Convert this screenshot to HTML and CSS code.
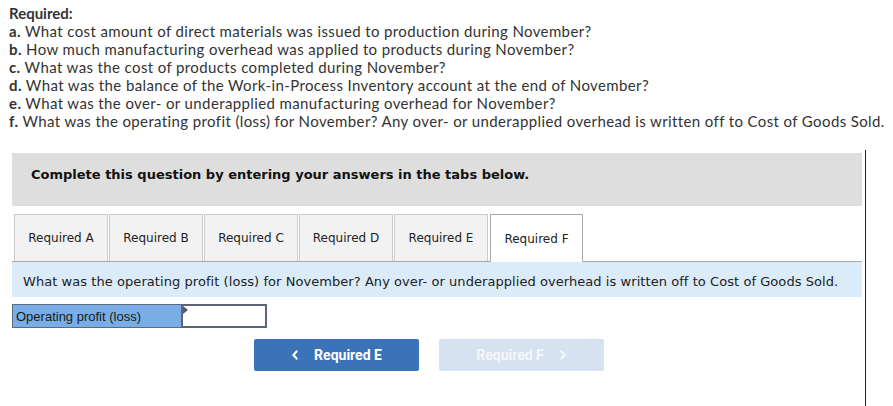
FILE: index.html
```html
<!doctype html>
<html>
  <head>
    <meta charset="utf-8" />
    <link rel="stylesheet" href="styles.css">
  </head>
  <body>
    <div class="required">
      <div class="required-title">Required:</div>
      <div class="q"><b>a.</b> What cost amount of direct materials was issued to production during November?</div>
      <div class="q"><b>b.</b> How much manufacturing overhead was applied to products during November?</div>
      <div class="q"><b>c.</b> What was the cost of products completed during November?</div>
      <div class="q"><b>d.</b> What was the balance of the Work-in-Process Inventory account at the end of November?</div>
      <div class="q"><b>e.</b> What was the over- or underapplied manufacturing overhead for November?</div>
      <div class="q"><b>f.</b> What was the operating profit (loss) for November? Any over- or underapplied overhead is written off to Cost of Goods Sold.</div>
    </div>

    <div class="panel">
      <div class="instructions">Complete this question by entering your answers in the tabs below.</div>

      <div class="tabs">
        <div class="tab">Required A</div>
        <div class="tab">Required B</div>
        <div class="tab">Required C</div>
        <div class="tab">Required D</div>
        <div class="tab">Required E</div>
        <div class="tab active">Required F</div>
      </div>

      <div class="prompt">What was the operating profit (loss) for November? Any over- or underapplied overhead is written off to Cost of Goods Sold.</div>

      <div class="answer-row">
        <div class="answer-label">Operating profit (loss)</div>
        <div class="answer-input"><span class="marker"></span></div>
      </div>

      <div class="nav">
        <button class="nav-btn prev">
          <svg viewBox="0 0 10 14" class="chev"><path d="M7 2 L2.5 7 L7 12" fill="none" stroke="currentColor" stroke-width="2.4" /></svg>
          Required E
        </button>
        <button class="nav-btn next" disabled>
          Required F
          <svg viewBox="0 0 10 14" class="chev"><path d="M3 2 L7.5 7 L3 12" fill="none" stroke="currentColor" stroke-width="2.4" /></svg>
        </button>
      </div>
    </div>
  </body>
</html>
```

FILE: styles.css
```css
* {
  box-sizing: border-box;
}

body {
  margin: 0;
  background: #fff;
  width: 893px;
  height: 406px;
  overflow: hidden;
}

/* Question list */
.required {
  padding: 4px 0 0 9px;
  font-family: 'Lato', 'Open Sans', sans-serif;
  font-size: 15px;
  letter-spacing: 0.38px;
  line-height: 18px;
  color: #333;
  white-space: nowrap;
}

.required-title {
  font-weight: 700;
  letter-spacing: 0;
}

.q b {
  font-weight: 700;
}

/* Answer panel */
.panel {
  margin: 20px 0 0 12px;
  width: 854px;
  height: 256px;
  padding-top: 3px;
  border-right: 1px solid #222;
  font-family: 'DejaVu Sans', Verdana, sans-serif;
}

.instructions {
  width: 850px;
  height: 53px;
  background: #dedede;
  padding: 14px 0 0 19px;
  font-size: 13px;
  line-height: 16px;
  font-weight: 700;
  color: #111;
}

/* Tabs */
.tabs {
  display: flex;
  gap: 1px;
  width: 850px;
  margin-top: 8px;
  padding-left: 2px;
  border-bottom: 1px solid #a9a9a9;
  height: 48px;
}

.tab {
  width: 94px;
  height: 47px;
  display: flex;
  align-items: center;
  justify-content: center;
  background: #f2f2f2;
  border: 1px solid #cacaca;
  border-bottom: none;
  font-size: 12px;
  color: #222;
}

.tab.active {
  margin-left: 1px;
  width: 93px;
  height: 48px;
  background: #fff;
  border-color: #a9a9a9;
}

.prompt {
  width: 850px;
  height: 35px;
  background: #dbebf8;
  padding: 3px 0 0 11px;
  display: flex;
  align-items: center;
  font-size: 13px;
  letter-spacing: 0.06px;
  color: #222;
}

/* Answer input */
.answer-row {
  display: flex;
  margin-top: 7px;
  height: 24px;
  font-family: 'Liberation Sans', Arial, sans-serif;
}

.answer-label {
  width: 169px;
  background: #78ade6;
  border: 1px solid #5c6b82;
  border-right: none;
  padding-left: 3px;
  display: flex;
  align-items: center;
  font-size: 13px;
  color: #1a1a1a;
}

.answer-input {
  position: relative;
  width: 86px;
  background: #fff;
  border: 2px solid #5d6577;
}

.marker {
  position: absolute;
  top: 0;
  left: 0;
  width: 0;
  height: 0;
  border-top: 4px solid transparent;
  border-bottom: 4px solid transparent;
  border-left: 5px solid #4a5a78;
}

/* Navigation */
.nav {
  display: flex;
  gap: 20px;
  margin: 11px 0 0 242px;
}

.nav-btn {
  width: 165px;
  height: 32px;
  border: none;
  border-radius: 2px;
  display: flex;
  align-items: center;
  justify-content: center;
  gap: 14px;
  font-family: 'Roboto', 'Liberation Sans', sans-serif;
  font-size: 14px;
  font-weight: 700;
  color: #fff;
  padding: 0;
}

.nav-btn.prev {
  background: #3b73b9;
}

.nav-btn.next {
  background: #d6e2f0;
  color: #f4f7fb;
}

.chev {
  width: 9px;
  height: 12px;
}
```
